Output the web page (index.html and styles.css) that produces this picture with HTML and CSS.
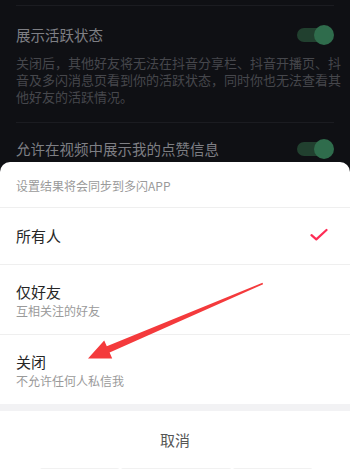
FILE: index.html
```html
<!DOCTYPE html>
<html lang="zh">
<head>
<meta charset="utf-8">
<link rel="stylesheet" href="styles.css">
</head>
<body>
<div class="screen">
  <div class="settings">
    <div class="setting first">
      <div class="setting-row">
        <span class="setting-title">展示活跃状态</span>
        <span class="toggle"><span class="knob"></span></span>
      </div>
      <p class="setting-desc">关闭后，其他好友将无法在抖音分享栏、抖音开播页、抖<br>音及多闪消息页看到你的活跃状态，同时你也无法查看其<br>他好友的活跃情况。</p>
    </div>
    <div class="setting second">
      <div class="setting-row">
        <span class="setting-title">允许在视频中展示我的点赞信息</span>
        <span class="toggle"><span class="knob"></span></span>
      </div>
    </div>
  </div>

  <div class="sheet">
    <div class="sheet-header">设置结果将会同步到多闪APP</div>
    <div class="option option-single">
      <span class="option-title">所有人</span>
      <svg class="check" width="18" height="14" viewBox="0 0 18 14"><path d="M1.5 7.2 L6.3 11.4 L16.5 2" fill="none" stroke="#fe2c55" stroke-width="2.2" stroke-linecap="round" stroke-linejoin="round"/></svg>
    </div>
    <div class="option">
      <div class="option-text">
        <span class="option-title">仅好友</span>
        <span class="option-sub">互相关注的好友</span>
      </div>
    </div>
    <div class="option last">
      <div class="option-text">
        <span class="option-title">关闭</span>
        <span class="option-sub">不允许任何人私信我</span>
      </div>
    </div>
    <div class="band"></div>
    <div class="cancel">取消</div>
    <div class="ghost-row"><span></span><span></span><span></span></div>
  </div>

  <svg class="arrow" width="350" height="469" viewBox="0 0 350 469">
    <polygon points="262.5,282.8 263.1,284.2 109.6,352.4 112.2,358.4 88,358.5 104.2,340.4 106.8,346.2" fill="#f43a3c"/>
  </svg>
</div>
</body>
</html>
```

FILE: styles.css
```css
* { box-sizing: border-box; }
html, body {
  margin: 0;
  padding: 0;
}
body {
  width: 350px;
  height: 469px;
  overflow: hidden;
  background: #0f1014;
  font-family: "Noto Sans CJK SC", "Noto Sans", sans-serif;
}
.screen {
  position: relative;
  width: 350px;
  height: 469px;
  overflow: hidden;
}
.settings {
  height: 162px;
  overflow: hidden;
  padding: 5px 16px 0;
}
.setting {
  border-top: 1px solid #1b1c21;
}
.setting.first {
  padding-top: 19px;
  padding-bottom: 17px;
}
.setting.second {
  padding-top: 16px;
}
.setting-row {
  display: flex;
  align-items: center;
  justify-content: space-between;
  height: 20px;
}
.setting-title {
  font-size: 14.5px;
  line-height: 20px;
  color: #7e7f84;
}
.toggle {
  position: relative;
  width: 36px;
  height: 14px;
  border-radius: 7px;
  background: #21402f;
  margin-right: 1px;
}
.knob {
  position: absolute;
  right: -1px;
  top: -3px;
  width: 20px;
  height: 20px;
  border-radius: 50%;
  background: #2f6c4c;
}
.setting-desc {
  margin: 9px -10px 0 0;
  font-size: 13px;
  line-height: 17px;
  color: #46474c;
  white-space: nowrap;
}
.sheet {
  background: #fff;
  border-radius: 10px 10px 0 0;
  height: 307px;
}
.sheet-header {
  height: 46px;
  padding: 2px 16px 0;
  display: flex;
  align-items: center;
  font-size: 12px;
  color: #9a9a9a;
  border-bottom: 1px solid #efefef;
}
.option {
  height: 70px;
  padding: 0 22px 0 16px;
  display: flex;
  align-items: center;
  justify-content: space-between;
  border-bottom: 1px solid #efefef;
}
.option.option-single {
  height: 57px;
}
.option.last {
  border-bottom: none;
  height: 69px;
}
.option-text {
  display: flex;
  flex-direction: column;
  padding-top: 1px;
}
.option-title {
  font-size: 15px;
  line-height: 20px;
  color: #262626;
}
.option-sub {
  font-size: 12px;
  line-height: 17px;
  color: #9a9a9a;
}
.check {
  display: block;
  margin-top: -2px;
}
.band {
  height: 7px;
  background: #f2f2f4;
}
.cancel {
  height: 57px;
  display: flex;
  align-items: center;
  justify-content: center;
  font-size: 15px;
  color: #565656;
}
.ghost-row {
  display: flex;
  gap: 2px;
  padding-left: 40px;
}
.ghost-row span {
  height: 8px;
  border: 1px solid #f1f1f1;
  border-bottom: none;
  border-radius: 2px 2px 0 0;
}
.ghost-row span:nth-child(1) { width: 79px; }
.ghost-row span:nth-child(2) { width: 110px; }
.ghost-row span:nth-child(3) { width: 79px; }
.arrow {
  position: absolute;
  left: 0;
  top: 0;
  pointer-events: none;
}
```
